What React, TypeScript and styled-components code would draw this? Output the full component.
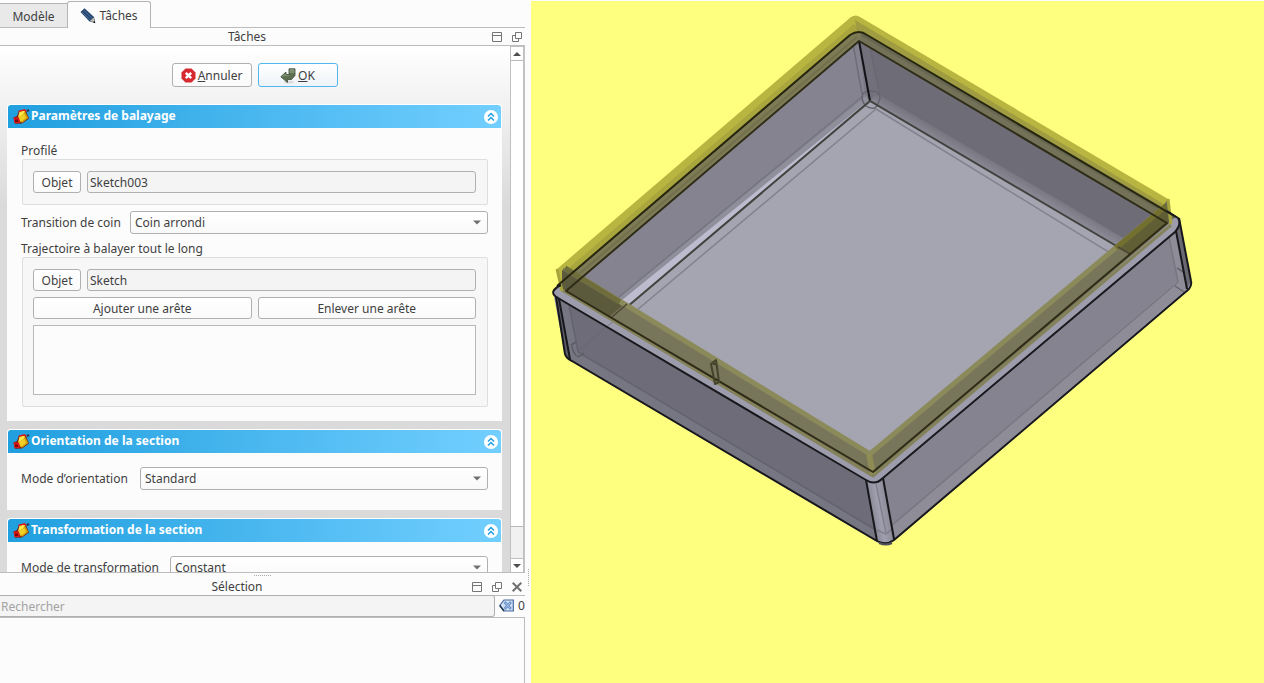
import React from 'react';
import styled, { createGlobalStyle } from 'styled-components';

const GlobalStyle = createGlobalStyle`
  *, *::before, *::after { box-sizing: border-box; }
  body {
    margin: 0;
    background: #fcfcfc;
    color: #3f3f3f;
    font-family: "Noto Sans", "Open Sans", sans-serif;
    font-size: 12px;
    line-height: 16px;
  }
  button, input, select, textarea { font: inherit; color: inherit; margin: 0; }
  svg { flex: none; }
`;

const Window = styled.div`
  display: flex;
  height: 100vh;
  overflow: hidden;
`;

const Sidebar = styled.aside`
  flex: none;
  width: 531px;
  display: flex;
  flex-direction: column;
  padding-right: 6px;
  position: relative;
`;

const Tabs = styled.div`
  flex: none;
  display: flex;
  align-items: flex-end;
  height: 28px;
  border-bottom: 1px solid #bcbcbc;
`;

const Tab = styled.button<{ $active?: boolean }>`
  display: flex;
  align-items: center;
  justify-content: center;
  gap: 3px;
  padding: 2px 8px 0;
  height: ${(p) => (p.$active ? 27 : 24)}px;
  width: ${(p) => (p.$active ? 84 : 68)}px;
  border: 1px solid #b4b4b4;
  border-bottom: 0;
  border-left-width: ${(p) => (p.$active ? 1 : 0)}px;
  border-radius: ${(p) => (p.$active ? '3px 3px 0 0' : '0')};
  margin-left: ${(p) => (p.$active ? -1 : 0)}px;
  margin-bottom: ${(p) => (p.$active ? -1 : 0)}px;
  background: ${(p) => (p.$active ? '#fcfcfc' : '#e9e9e9')};
  white-space: nowrap;
`;

const DockTitle = styled.header`
  flex: none;
  display: flex;
  align-items: center;
  gap: 10px;
  height: 18px;
  padding: 0 3px 0 12px;
  border-bottom: 1px solid #bcbcbc;
`;

const DockName = styled.h2`
  flex: 1;
  margin: 0;
  padding-top: 1px;
  font-size: 12px;
  font-weight: 400;
  text-align: center;
`;

const IconButton = styled.button`
  display: flex;
  padding: 0;
  border: 0;
  background: none;
`;

const ScrollRow = styled.div`
  flex: 1;
  min-height: 0;
  display: flex;
  border-right: 1px solid #c4c4c4;
`;

const ScrollContent = styled.div`
  flex: 1;
  min-width: 0;
  overflow: hidden;
  padding: 17px 8px 0 7px;
  background: linear-gradient(#ffffff 0, #dadada 160px);
`;

const DialogButtons = styled.div`
  display: flex;
  justify-content: center;
  gap: 6px;
  margin-bottom: 17px;
`;

const PushButton = styled.button<{ $primary?: boolean }>`
  display: flex;
  align-items: center;
  justify-content: center;
  gap: 2px;
  min-width: 80px;
  height: 24px;
  padding: 1px 8px 0;
  border: 1px solid ${(p) => (p.$primary ? '#52b7ec' : '#b0b0b0')};
  border-radius: 3px;
  background: ${(p) => (p.$primary ? 'linear-gradient(#ffffff, #eef4f9)' : 'linear-gradient(#ffffff, #fafafa)')};
`;

const Panel = styled.section`
  margin-bottom: 8px;
  background: #fcfcfc;
  border-radius: 4px 4px 0 0;
`;

const PanelHeader = styled.header`
  display: flex;
  align-items: center;
  gap: 1px;
  height: 24px;
  padding: 0 3px 0 5px;
  border: 1px solid #ffffff;
  border-bottom: 0;
  border-radius: 4px 4px 0 0;
  background: linear-gradient(90deg, #209fdf, #72cfff);
`;

const PanelTitle = styled.h3`
  flex: 1;
  margin: 0;
  padding-bottom: 1px;
  color: #ffffff;
  font-size: 12px;
  font-weight: 700;
`;

const PanelBody = styled.div<{ $top: number; $bottom: number }>`
  padding: ${(p) => p.$top}px 14px ${(p) => p.$bottom}px;
`;

const Caption = styled.div`
  padding-top: 1px;
`;

const Group = styled.div`
  display: flex;
  flex-direction: column;
  gap: 6px;
  margin-left: 1px;
  padding: 11px 11px 11px 10px;
  border: 1px solid #dedede;
  border-radius: 2px;
  background: #f7f7f7;
`;

const Row = styled.div`
  display: flex;
  align-items: center;
  gap: 6px;
`;

const FieldRow = styled.div<{ $gap?: number }>`
  display: flex;
  align-items: center;
  gap: 7px;
  margin: ${(p) => p.$gap || 0}px 0;
`;

const SmallButton = styled.button<{ $grow?: boolean }>`
  flex: ${(p) => (p.$grow ? '1 1 0' : '0 0 48px')};
  height: 22px;
  padding: 1px 0 0;
  border: 1px solid #b0b0b0;
  border-radius: 3px;
  background: linear-gradient(#ffffff, #fafafa);
`;

const TextField = styled.input`
  flex: 1;
  min-width: 0;
  height: 22px;
  padding: 0 2px;
  border: 1px solid #b0b0b0;
  border-radius: 3px;
  background: #f4f4f4;
  outline: 0;
`;

const EdgeList = styled.textarea`
  display: block;
  width: 100%;
  height: 70px;
  border: 1px solid #b8b8b8;
  border-radius: 0;
  background: #fcfcfc;
  resize: none;
  outline: 0;
`;

const SelectBox = styled.div`
  flex: 1;
  position: relative;
`;

const SelectInput = styled.select`
  appearance: none;
  display: block;
  width: 100%;
  height: 23px;
  padding: 0 24px 0 4px;
  border: 1px solid #b0b0b0;
  border-radius: 3px;
  background: linear-gradient(#ffffff, #f9f9f9);
`;

const SelectArrow = styled.svg`
  position: absolute;
  right: 7px;
  top: 9px;
  pointer-events: none;
`;

const FieldLabel = styled.label<{ $width: number }>`
  flex: 0 0 ${(p) => p.$width}px;
  white-space: nowrap;
`;

const ScrollTrack = styled.div`
  flex: none;
  width: 14px;
  display: flex;
  flex-direction: column;
  border: 1px solid #c0c0c0;
  border-bottom: 0;
  background: #f1f1f1;
`;

const ScrollArrow = styled.button`
  flex: none;
  height: 13px;
  display: flex;
  align-items: center;
  justify-content: center;
  padding: 0;
  border: 0;
  background: #ffffff;
`;

const ScrollThumb = styled.div`
  flex: 1;
  background: #ffffff;
  border-top: 1px solid #b8b8b8;
  border-bottom: 1px solid #b8b8b8;
`;

const ScrollRest = styled.div`
  flex: 0 0 32px;
  border-bottom: 1px solid #c0c0c0;
`;

const SelectionDock = styled.section`
  flex: none;
  height: 111px;
  display: flex;
  flex-direction: column;
  border-top: 1px solid #bcbcbc;
`;

const Grip = styled.div`
  flex: none;
  align-self: center;
  width: 17px;
  height: 3px;
  margin-bottom: 2px;
  border-bottom: 1px dotted #a8a8a8;
`;

const SideGrip = styled.div`
  position: absolute;
  right: 2px;
  bottom: 97px;
  height: 17px;
  border-left: 1px dotted #a8a8a8;
`;

const SearchRow = styled.div`
  flex: none;
  display: flex;
  align-items: center;
  gap: 4px;
  margin-top: -1px;
`;

const SearchField = styled.input`
  flex: 1;
  min-width: 0;
  height: 22px;
  padding: 0 1px;
  border: 1px solid #b0b0b0;
  border-left: 0;
  border-radius: 0 3px 3px 0;
  background: #f4f4f4;
  outline: 0;
  &::placeholder { color: #a3a3a3; opacity: 1; }
`;

const SelectionCount = styled.output`
  width: 7px;
`;

const SelectionList = styled.div`
  flex: 1;
  border: 1px solid #bcbcbc;
  border-left: 0;
  border-bottom: 0;
`;

const Viewer = styled.main`
  flex: 1;
  min-width: 0;
  margin-top: 1px;
  background: #ffff7f;
`;

const Scene = styled.svg`
  display: block;
  width: 100%;
  height: 100%;
`;

const PencilIcon = () => (
  <svg width="16" height="16" viewBox="0 0 16 16" aria-hidden="true">
    <path d="M.5 4 4.500.3 14 9l1.300 6L9.500 13.500Z" fill="#26466f" />
    <path d="M2 4 10.800 12.600M3.800 2.300 12.600 10.800" stroke="#4d729f" strokeWidth="1" />
    <path d="m9.800 13.300 3.800-3.800 1.200 4.800Z" fill="#c7bfa8" />
    <path d="m13 14.200 1.500-1.500.8 2.500Z" fill="#111" />
  </svg>
);

const CancelIcon = () => (
  <svg width="15" height="15" viewBox="0 0 15 15" aria-hidden="true">
    <path d="M4.500.5h6l4 4v6l-4 4h-6l-4-4v-6Z" fill="#d62a30" />
    <path d="m4.800 4.800 5.400 5.400m0-5.400-5.400 5.400" stroke="#fff" strokeWidth="2.400" />
  </svg>
);

const EnterIcon = () => (
  <svg width="16" height="16" viewBox="0 0 16 16" aria-hidden="true">
    <ellipse cx="9" cy="14" rx="5" ry="1.500" fill="#ddd" />
    <path d="M9 .8h6v6.700l-3.500 4H7.500v3L.8 8.800 6 4v2.500h3Z" fill="#5d7052" stroke="#3e4b38" strokeWidth=".8" />
    <path d="M10 1.600h4v3h-4ZM2.300 8.600 5.500 6v1.500H9" fill="#7d9170" stroke="#8fa083" strokeWidth=".6" />
  </svg>
);

const SweepIcon = () => (
  <svg width="17" height="16" viewBox="0 0 17 16" aria-hidden="true">
    <path d="M.5 8.500 4 7 6 1.800 12.500 1l3.500 8.500L9 14.500l-7 .3Z" fill="#7c1d12" />
    <path d="M6.500 2.500 12 1.800 11.500 5 5 8.500Z" fill="#ffe94a" />
    <path d="m12 2.500 3.300 6.500-6.500 5-2-4Z" fill="#d2a20e" />
    <path d="m5 8 6.500-3 1.500 4-5.500 4Z" fill="#f1cf25" />
    <path d="M.5 8.500h5.500l1 5.500H1.500Z" fill="#e01818" />
    <path d="M2 10.500h3v2.500H2Z" fill="#7f0707" />
    <path d="m5.500 2.300 6-1.500 2 1.700" fill="none" stroke="#e01818" strokeWidth="1.300" />
    <path d="m14 2 2-1" stroke="#27364a" strokeWidth="2" />
  </svg>
);

const CollapseIcon = () => (
  <svg width="14" height="14" viewBox="0 0 14 14" aria-hidden="true">
    <circle cx="7" cy="7" r="7" fill="#fff" />
    <path d="m4 6.500 3-3 3 3m-6 4 3-3 3 3" fill="none" stroke="#209fdf" strokeWidth="1.500" />
  </svg>
);

const ShadeIcon = () => (
  <svg width="10" height="10" viewBox="0 0 10 10" aria-hidden="true">
    <path d="M.5.5h9v9h-9ZM.5 3.500h9" fill="none" stroke="#757575" />
  </svg>
);

const FloatIcon = () => (
  <svg width="10" height="10" viewBox="0 0 10 10" aria-hidden="true">
    <path d="M3.500.5h6v6h-6ZM3.500 3.500h-3v6h6v-3" fill="none" stroke="#757575" />
  </svg>
);

const CloseIcon = () => (
  <svg width="10" height="10" viewBox="0 0 10 10" aria-hidden="true">
    <path d="m.7.7 8.600 8.600m0-8.600L.7 9.300" stroke="#707070" strokeWidth="2" />
  </svg>
);

const ClearIcon = () => (
  <svg width="15" height="14" viewBox="0 0 15 14" aria-hidden="true">
    <path d="M5 1h9.300v11H5L.8 6.500Z" fill="#d4e2f4" stroke="#46699f" strokeWidth="1.200" />
    <path d="M5 12 .8 6.500" stroke="#20344f" strokeWidth="1.500" />
    <path d="m5.500 3 6.500 7m0-7-6.500 7" stroke="#6690c8" strokeWidth="2.600" />
    <path d="m6 3.500 5.500 6m0-6-5.500 6" stroke="#a8c3e6" strokeWidth="1" />
  </svg>
);

const Triangle = ({ up }: { up?: boolean }) => (
  <svg width="8" height="4" viewBox="0 0 8 4" aria-hidden="true">
    <path d={up ? 'M0 4h8L4 0Z' : 'M0 0h8L4 4Z'} fill="#4e4e4e" />
  </svg>
);

interface SelectProps { id: string; label: string; width: number; value: string; gap?: number }

const SelectField = ({ id, label, width, value, gap }: SelectProps) => (
  <FieldRow $gap={gap}>
    <FieldLabel htmlFor={id} $width={width}>{label}</FieldLabel>
    <SelectBox>
      <SelectInput id={id} defaultValue={value}><option>{value}</option></SelectInput>
      <SelectArrow width="8" height="5" viewBox="0 0 8 5" aria-hidden="true">
        <path d="M0 .5h8L4 4.500Z" fill="#707070" />
      </SelectArrow>
    </SelectBox>
  </FieldRow>
);

interface TaskPanelProps { title: string; top: number; bottom: number; children: React.ReactNode }

const TaskPanel = ({ title, top, bottom, children }: TaskPanelProps) => (
  <Panel>
    <PanelHeader>
      <SweepIcon />
      <PanelTitle>{title}</PanelTitle>
      <IconButton aria-label="Replier"><CollapseIcon /></IconButton>
    </PanelHeader>
    <PanelBody $top={top} $bottom={bottom}>{children}</PanelBody>
  </Panel>
);

const Model = () => (
  <Scene viewBox="531 1 733 682" preserveAspectRatio="xMinYMin meet" role="img" aria-label="Vue 3D">
    <defs>
      <linearGradient id="pillar" gradientUnits="userSpaceOnUse" x1="869" y1="510" x2="891" y2="506">
        <stop offset="0" stopColor="#83828e" />
        <stop offset=".45" stopColor="#a09fb0" />
        <stop offset="1" stopColor="#85848f" />
      </linearGradient>
      <linearGradient id="backWall" gradientUnits="userSpaceOnUse" x1="1006" y1="163" x2="998" y2="177">
        <stop offset="0" stopColor="#6e6d77" />
        <stop offset="1" stopColor="#8b8a96" />
      </linearGradient>
    </defs>

    {/* outer body */}
    <path d="M553 292 557 286 850 35Q859 29 867 35L1177 217Q1180 220 1180 225L1191 281Q1192 286 1189 290L894 541Q886 547 877 542L572 362Q566 359 565 354Z" fill="#9d9cad" />
    <path d="M559 299 866 481 877 541 572 361Z" fill="#6d6c78" />
    <path d="M555 296 559 299 571 360 566 355Z" fill="#5e5d68" />
    <path d="m560 299 9 6 9 47 298 179 1 10L571 360Z" fill="#7a7985" opacity=".75" />
    <path d="m569 305 9 47 298 178" fill="none" stroke="#64636e" strokeWidth="1.500" />
    <path d="m571 345 5-3m-4 4q1 8 6 11l6-4" fill="none" stroke="#5b5a64" strokeWidth="1.500" />
    <path d="m572 354 304 181" fill="none" stroke="#777683" strokeWidth="1" />
    <path d="m578 351 38-32" stroke="#64636e" strokeWidth="1" opacity=".6" />
    <path d="M883 479 1176 231 1187 288 894 539Z" fill="#84838f" />
    <path d="m890 527 288-247-9-43 7-6 11 57L894 539Z" fill="#8d8c97" />
    <path d="m890 527 288-245-9-45" fill="none" stroke="#777681" strokeWidth="1.500" />
    <path d="m1177 268 8 5m-10 13 9 6" stroke="#666570" strokeWidth="1.500" />
    <path d="M1176 231 1180 222 1191 281 1187 289Z" fill="#6a6972" />
    <path d="M866 480q8 6 17-1l11 60q-8 7-17 2Z" fill="url(#pillar)" />
    <path d="m876 484 10 49m-9-3 9 4 7-6" fill="none" stroke="#777682" strokeWidth="1.500" opacity=".7" />

    {/* inside of the box */}
    <path d="M859 41 566 291 614 318 870 101Z" fill="#84838f" />
    <path d="M859 41 1167 223 1130 254 870 101Z" fill="#6e6d77" />
    <path d="M876 92 1140 247 1130 254 870 101Z" fill="url(#backWall)" />
    <path d="M870 101 1130 254 873 472 614 318Z" fill="#a5a4b1" />
    <path d="M866 96 602 311 614 318 870 101Z" fill="#8f8e9b" />
    <path d="M868 101 606 313 614 318Z" fill="#bdbccf" />
    <path d="M863 96 602 311M876 109 624 321M876 109 1120 259M876 92 1140 247" fill="none" stroke="#6b6a76" strokeWidth="1.500" opacity=".6" />
    <path d="m852 38 10 56m7-52 10 52" stroke="#666570" strokeWidth="1.500" opacity=".7" />
    <path d="m859 41 6 54 5 6 9-7-10-48Z" fill="#74737f" opacity=".6" />
    <path d="M862 97q0-6 9-6 8 0 9 6-1 7-5 11-5 1-9-2-4-4-4-9Z" fill="none" stroke="#65646f" strokeWidth="1.500" />
    <path d="m859 41 11 60" stroke="#111116" strokeWidth="2" />
    <path d="M614 318 870 101 1130 254" fill="none" stroke="#41423e" strokeWidth="2" />

    {/* swept preview, back */}
    <path d="M557 269 851 17Q856 14 860 17L1168 199 1171 216 867 35Q859 29 850 35L560 284Z" fill="#b8b540" />
    <path d="M563 273 854 24 859 30 850 35 562 282Z" fill="#a9a63e" />
    <path d="m855 20 307 183 5 9L867 35l-10-4Z" fill="#969242" opacity=".7" />
    <path d="M562 282 850 35Q859 29 867 35L859 41 566 291Z" fill="#7d7b56" />
    <path d="M862 32 867 35 1176 217 1167 223 859 41Z" fill="#737259" />
    <path d="m862 34 308 180" stroke="#62614e" strokeWidth="4" opacity=".65" />
    <path d="m565 286 292-249" stroke="#6b6945" strokeWidth="2" opacity=".6" />

    {/* swept preview, front */}
    <path d="M563 268 575 272 870 452 1162 207 1168 199 1171 222 873 477 562 291Z" fill="#77765b" />
    <path d="M562 270 622 306 609 317 562 290Z" fill="#5c5a3d" />
    <path d="M1166 203 1116 246 1130 254 1169 222Z" fill="#605e35" />
    <path d="m577 275 293 179 292-245" fill="none" stroke="#8b8a5b" strokeWidth="5" />
    <path d="M565 268 620 302" fill="none" stroke="#6f6d3c" strokeWidth="5" />
    <path d="m1116 248 50-42" fill="none" stroke="#726f2f" strokeWidth="5" />
    <path d="m562 290 311 186 298-251" fill="none" stroke="#84825a" strokeWidth="3" />
    <path d="m557 269 5 22m606-92 3 25" stroke="#a7a43d" strokeWidth="3" />
    <path d="m869 454 4 20" stroke="#8e8c54" strokeWidth="6" />
    <path d="m612 317 15-13M1118 247l12 7" stroke="#494734" strokeWidth="1.500" />

    {/* edges */}
    <g fill="none" strokeLinejoin="round">
      <path d="M859 41 566 291 873 472 1167 223Z" stroke="#2e2c16" strokeWidth="2" />
      <path d="M557 286 850 35Q859 29 867 35L1176 217" stroke="#26250f" strokeWidth="2" />
      <path d="M561 285Q547 292 558 298L866 480Q875 486 883 478L1175 232Q1182 224 1178 218L1167 211" stroke="#17171c" strokeWidth="2" />
      <path d="m556 297 9 57q1 4 7 7l305 180q9 5 17-1l295-251q3-4 2-8l-12-63M559 299l11 60M866 480l11 61M883 478l11 61M1176 231l11 58" stroke="#17171c" strokeWidth="2" />
      <path d="m879 543q7 3 13 0" stroke="#50505b" strokeWidth="2" />
      <path d="m711 364 5-4 3 22-4 2Zm2 0h4" stroke="#44442d" strokeWidth="2" />
    </g>
  </Scene>
);

export default function App() {
  return (
    <>
      <GlobalStyle />
      <Window>
        <Sidebar>
          <Tabs role="tablist">
            <Tab role="tab">Modèle</Tab>
            <Tab role="tab" aria-selected="true" $active><PencilIcon />Tâches</Tab>
          </Tabs>
          <DockTitle>
            <DockName>Tâches</DockName>
            <IconButton aria-label="Réduire"><ShadeIcon /></IconButton>
            <IconButton aria-label="Détacher"><FloatIcon /></IconButton>
          </DockTitle>
          <ScrollRow>
            <ScrollContent>
              <DialogButtons>
                <PushButton><CancelIcon /><span><u>A</u>nnuler</span></PushButton>
                <PushButton $primary><EnterIcon /><span><u>O</u>K</span></PushButton>
              </DialogButtons>

              <TaskPanel title="Paramètres de balayage" top={14} bottom={14}>
                <Caption>Profilé</Caption>
                <Group>
                  <Row>
                    <SmallButton>Objet</SmallButton>
                    <TextField aria-label="Profilé" defaultValue="Sketch003" readOnly />
                  </Row>
                </Group>
                <SelectField id="corner" label="Transition de coin" width={102} value="Coin arrondi" gap={6} />
                <Caption>Trajectoire à balayer tout le long</Caption>
                <Group>
                  <Row>
                    <SmallButton>Objet</SmallButton>
                    <TextField aria-label="Trajectoire" defaultValue="Sketch" readOnly />
                  </Row>
                  <Row>
                    <SmallButton $grow>Ajouter une arête</SmallButton>
                    <SmallButton $grow>Enlever une arête</SmallButton>
                  </Row>
                  <EdgeList aria-label="Arêtes" readOnly />
                </Group>
              </TaskPanel>

              <TaskPanel title="Orientation de la section" top={14} bottom={20}>
                <SelectField id="orientation" label="Mode d’orientation" width={112} value="Standard" />
              </TaskPanel>

              <TaskPanel title="Transformation de la section" top={14} bottom={20}>
                <SelectField id="transformation" label="Mode de transformation" width={142} value="Constant" />
              </TaskPanel>
            </ScrollContent>
            <ScrollTrack>
              <ScrollArrow aria-label="Défiler vers le haut"><Triangle up /></ScrollArrow>
              <ScrollThumb />
              <ScrollRest />
              <ScrollArrow aria-label="Défiler vers le bas"><Triangle /></ScrollArrow>
            </ScrollTrack>
          </ScrollRow>
          <SelectionDock>
            <Grip />
            <DockTitle>
              <DockName>Sélection</DockName>
              <IconButton aria-label="Réduire"><ShadeIcon /></IconButton>
              <IconButton aria-label="Détacher"><FloatIcon /></IconButton>
              <IconButton aria-label="Fermer"><CloseIcon /></IconButton>
            </DockTitle>
            <SearchRow>
              <SearchField aria-label="Rechercher" placeholder="Rechercher" />
              <IconButton aria-label="Effacer"><ClearIcon /></IconButton>
              <SelectionCount>0</SelectionCount>
            </SearchRow>
            <SelectionList />
          </SelectionDock>
          <SideGrip />
        </Sidebar>
        <Viewer><Model /></Viewer>
      </Window>
    </>
  );
}
